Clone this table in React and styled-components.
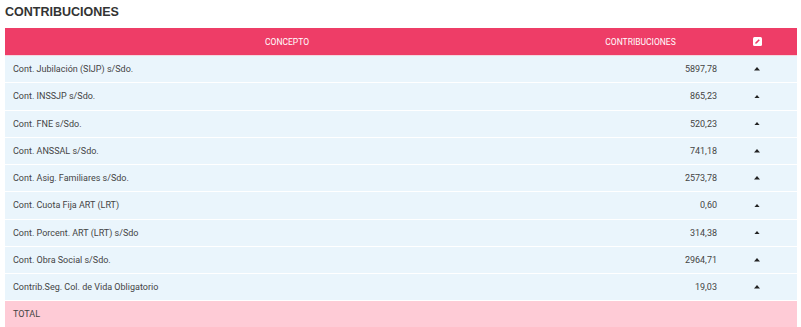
import React from "react";
import styled, { createGlobalStyle } from "styled-components";

const GlobalStyle = createGlobalStyle`
  body {
    margin: 0;
    background: #ffffff;
    font-family: Roboto, "Liberation Sans", sans-serif;
  }
`;

const Page = styled.div`
  padding: 4px 4px 0 5px;
`;

const Title = styled.h2`
  margin: 0 0 7px 0;
  font-family: "Liberation Sans", Arial, sans-serif;
  font-weight: 700;
  font-size: 12.5px;
  line-height: 17px;
  color: #333333;
`;

const Table = styled.div`
  display: grid;
  grid-template-columns: 564px 153px 1fr;
`;

const HeadCell = styled.div`
  height: 28px;
  background: #ee3d67;
  color: #ffffff;
  font-size: 8.5px;
  text-transform: uppercase;
  display: flex;
  align-items: center;
  justify-content: center;
  padding-right: ${(p) => p.$shift || 0}px;
  border-bottom: 1px solid #f4d6de;
  box-sizing: border-box;
`;

const Cell = styled.div`
  height: 27.25px;
  box-sizing: border-box;
  background: ${(p) => (p.$total ? "#fecbd6" : "#eaf5fc")};
  border-bottom: 1px solid ${(p) => (p.$total ? "#fecbd6" : "#ffffff")};
  color: #444444;
  font-size: 9px;
  display: flex;
  align-items: center;
  justify-content: ${(p) => p.$align || "flex-start"};
  padding: ${(p) => (p.$align ? "0 5px 0 0" : "0 0 0 8px")};
`;

const EditIcon = () => (
  <svg width="9" height="9" viewBox="0 0 9 9">
    <rect x="0" y="0" width="9" height="9" rx="1.5" fill="#ffffff" />
    <path d="M2.2 6.8 L2.6 5.3 L5.7 2.2 L6.8 3.3 L3.7 6.4 Z" fill="#ee3d67" />
  </svg>
);

const Caret = () => (
  <svg width="6" height="3.5" viewBox="0 0 6 3.5">
    <path d="M0 3.5 L3 0 L6 3.5 Z" fill="#222222" />
  </svg>
);

const rows = [
  ["Cont. Jubilación (SIJP) s/Sdo.", "5897,78"],
  ["Cont. INSSJP s/Sdo.", "865,23"],
  ["Cont. FNE s/Sdo.", "520,23"],
  ["Cont. ANSSAL s/Sdo.", "741,18"],
  ["Cont. Asig. Familiares s/Sdo.", "2573,78"],
  ["Cont. Cuota Fija ART (LRT)", "0,60"],
  ["Cont. Porcent. ART (LRT) s/Sdo", "314,38"],
  ["Cont. Obra Social s/Sdo.", "2964,71"],
  ["Contrib.Seg. Col. de Vida Obligatorio", "19,03"],
];

export default function App() {
  return (
    <Page>
      <GlobalStyle />
      <Title>CONTRIBUCIONES</Title>
      <Table>
        <HeadCell>Concepto</HeadCell>
        <HeadCell $shift={10}>Contribuciones</HeadCell>
        <HeadCell $shift={5}>
          <EditIcon />
        </HeadCell>
        {rows.map(([name, value]) => (
          <React.Fragment key={name}>
            <Cell>{name}</Cell>
            <Cell $align="flex-end">{value}</Cell>
            <Cell $align="center">
              <Caret />
            </Cell>
          </React.Fragment>
        ))}
        <Cell $total>TOTAL</Cell>
        <Cell $total $align="flex-end"></Cell>
        <Cell $total $align="center"></Cell>
      </Table>
    </Page>
  );
}
